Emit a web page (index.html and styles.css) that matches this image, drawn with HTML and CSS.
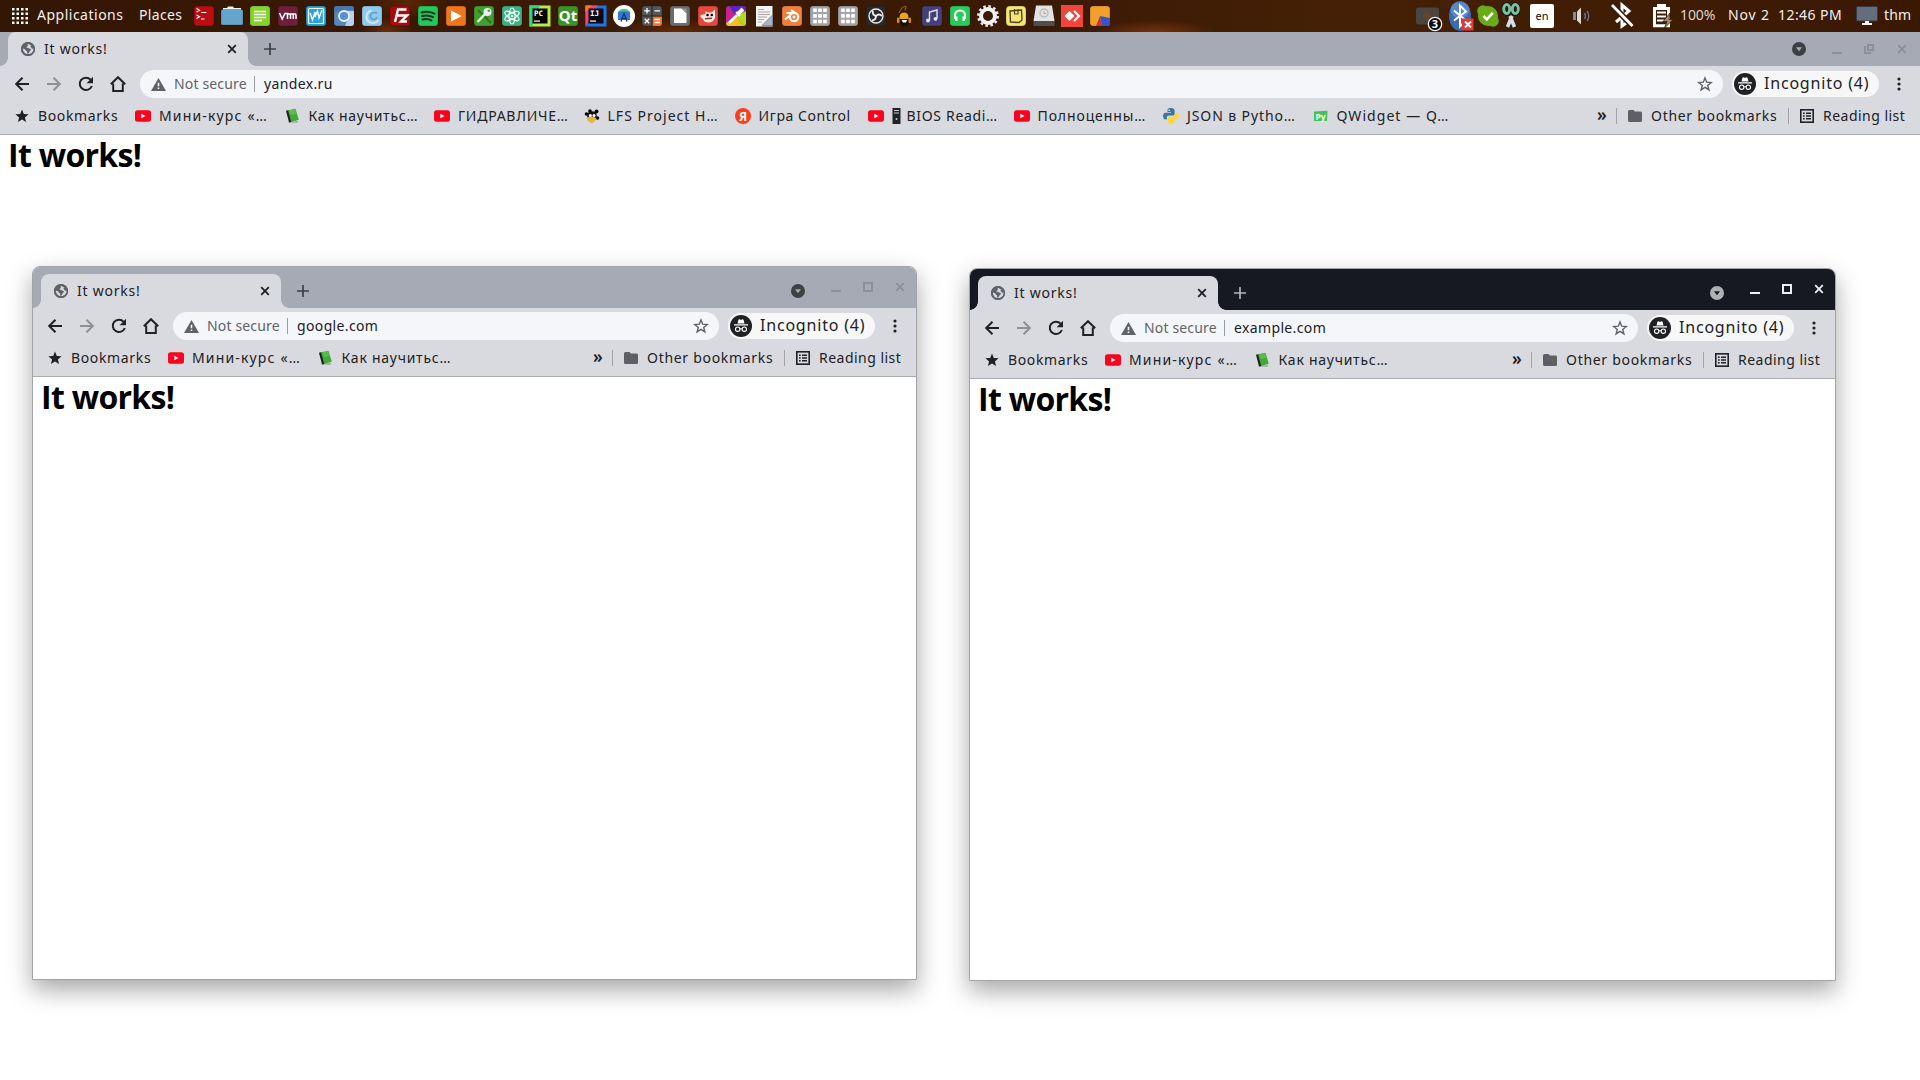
FILE: index.html
```html
<!DOCTYPE html>
<html lang="en">
<head>
<meta charset="utf-8">
<title>It works!</title>
<link rel="stylesheet" href="styles.css">
</head>
<body>
<svg class="defs" width="0" height="0">
  <symbol id="globe" viewBox="0 0 14 14"><circle cx="7" cy="7" r="7" fill="#5f6368"/><path d="M7.600 2c-1 .2-1.200.9-.8 1.500.3.600-.5.800-1 1.200-.6.500-.2 1 .6 1 1.500 0 1.500.9 2.500 1 1 0 1.200.9.600 1.700-.5.800-1 .7-1.300 1.600-.3.900-.9 2-1.800 2.100l-.3-2.400c-.1-.8-1.300-.6-1.400-1.500 0-.8-.8-.9-1.600-1.300l-1.300-.5c.2 3.400 2.400 5.700 5.500 5.700 3.300 0 5.700-2.500 5.700-5.500l-1.900.2c-.7-.2-.5-1.200-1.300-1.500-.9-.2-.2-1.200.6-1.600z" fill="#d9dadf"/><circle cx="7" cy="7" r="6.300" fill="none" stroke="#5f6368" stroke-width="1.500"/></symbol>
  <symbol id="close" viewBox="0 0 10 10"><path d="M1.200 1.200l7.600 7.600M8.800 1.200l-7.600 7.600" stroke="currentColor" stroke-width="1.800"/></symbol>
  <symbol id="plus" viewBox="0 0 12 12"><path d="M6 0v12M0 6h12" stroke="currentColor" stroke-width="1.700"/></symbol>
  <symbol id="tabsearch" viewBox="0 0 14 14"><circle cx="7" cy="7" r="7" fill="currentColor"/><path d="M4 5.200h6L7 9.200z" class="tri"/></symbol>
  <symbol id="min" viewBox="0 0 10 10"><path d="M0 8h10v2H0z" fill="currentColor"/></symbol>
  <symbol id="max" viewBox="0 0 10 10"><path d="M1 1h8v8H1z" fill="none" stroke="currentColor" stroke-width="2"/></symbol>
  <symbol id="restore" viewBox="0 0 10 10"><path d="M4 1h5v5H4z" fill="none" stroke="currentColor" stroke-width="2"/><path d="M1 2v7h6" fill="none" stroke="currentColor" stroke-width="2"/></symbol>
  <symbol id="back" viewBox="0 0 16 16"><path d="M15 8H2.500M8.500 1.700L2.200 8l6.300 6.300" fill="none" stroke="currentColor" stroke-width="2"/></symbol>
  <symbol id="forward" viewBox="0 0 16 16"><path d="M1 8h12.500M7.500 1.700L13.800 8l-6.300 6.300" fill="none" stroke="currentColor" stroke-width="2"/></symbol>
  <symbol id="reload" viewBox="0 0 16 16"><path d="M13.800 10A6.200 6.200 0 1 1 12.600 3.700" fill="none" stroke="currentColor" stroke-width="2"/><path d="M15 .8v6.400H8.600z" fill="currentColor"/></symbol>
  <symbol id="home" viewBox="0 0 16 16"><path d="M.8 8.300L8 1.200l7.200 7.100M3.200 7.500v7.500h9.600V7.500" fill="none" stroke="currentColor" stroke-width="2"/></symbol>
  <symbol id="warn" viewBox="0 0 15 13"><path d="M7.500 0L15 13H0z" fill="#5f6368"/><path d="M6.700 4.800h1.600v3.500H6.700zM6.700 9.500h1.600v1.600H6.700z" fill="#f5f6f9"/></symbol>
  <symbol id="staroutline" viewBox="0 0 16 16"><path d="M8 1.900l1.700 4.300 4.600.3-3.600 2.900 1.200 4.500L8 11.400l-3.900 2.500 1.200-4.500L1.700 6.500l4.600-.3z" fill="none" stroke="#5f6368" stroke-width="1.400"/></symbol>
  <symbol id="incog" viewBox="0 0 22 22"><circle cx="11" cy="11" r="11" fill="#202124"/><path d="M7.500 8.500L8.400 5c.2-.7.800-.8 1.400-.5.800.3 1.600.3 2.400 0 .6-.3 1.200-.2 1.400.5l.9 3.500zM4 9.300h14v1.200H4z" fill="#fff"/><circle cx="7.700" cy="14.200" r="2.200" fill="none" stroke="#fff" stroke-width="1.100"/><circle cx="14.300" cy="14.200" r="2.200" fill="none" stroke="#fff" stroke-width="1.100"/><path d="M9.900 14q1.100-.8 2.200 0" fill="none" stroke="#fff"/></symbol>
  <symbol id="dots" viewBox="0 0 4 14"><circle cx="2" cy="2" r="1.600"/><circle cx="2" cy="7" r="1.600"/><circle cx="2" cy="12" r="1.600"/></symbol>
  <symbol id="star" viewBox="0 0 16 16"><path d="M8 1.500l1.800 4.500 4.800.3-3.700 3.100 1.200 4.700L8 11.500l-4.100 2.600 1.200-4.700L1.400 6.300 6.200 6z" fill="#202124"/></symbol>
  <symbol id="yt" viewBox="0 0 16 16"><rect y="2.300" width="16" height="11.400" rx="2.500" fill="#f9041c"/><path d="M6.300 5.700v4.600l4.200-2.300z" fill="#fff"/></symbol>
  <symbol id="book" viewBox="0 0 16 16"><path d="M2 14.300l11.500-1.500L12 15z" fill="#aaa"/><path d="M1 2.700l3-.7L6.500 14l-2.500.5z" fill="#1d2320"/><path d="M3 2.200L10.500.800l3.300 11L6.300 14z" fill="#43a83a"/><path d="M4 2.500l6-1.200 1.500 4.800-6 1z" fill="#5dbb4b"/></symbol>
  <symbol id="folder" viewBox="0 0 14 12"><path d="M1.500 0H5.500L7 1.600h5.500A1.500 1.500 0 0 1 14 3v7.500A1.500 1.500 0 0 1 12.500 12h-11A1.500 1.500 0 0 1 0 10.500v-9A1.500 1.500 0 0 1 1.500 0z" fill="#5f6063"/></symbol>
  <symbol id="list" viewBox="0 0 14 14"><rect x=".8" y=".8" width="12.400" height="12.400" fill="none" stroke="#202124" stroke-width="1.600"/><path d="M3 4.200h1.700M6 4.200h5M3 7h1.700M6 7h5M3 9.800h1.700M6 9.800h5" stroke="#202124" stroke-width="1.400"/></symbol>
</svg>

<header class="panel">
  <svg class="grid" width="16" height="16" viewBox="0 0 16 16" fill="#fff"><path d="M0 0h2.500v2.500H0zM4.500 0H7v2.500H4.500zM9 0h2.500v2.500H9zM13.500 0H16v2.500h-2.500zM0 4.500h2.500V7H0zM4.500 4.500H7V7H4.500zM9 4.500h2.500V7H9zM13.500 4.500H16V7h-2.500zM0 9h2.500v2.500H0zM4.500 9H7v2.500H4.500zM9 9h2.500v2.500H9zM13.500 9H16v2.500h-2.500zM0 13.500h2.500V16H0zM4.500 13.500H7V16H4.500zM9 13.500h2.500V16H9zM13.500 13.500H16V16h-2.500z"/></svg>
  <span class="menu menu-apps">Applications</span>
  <span class="menu menu-places">Places</span>
  <div class="launchers">
    <svg viewBox="0 0 28 32"><rect class="b" x="4" y="6" width="20" height="20" rx="3" fill="#b90d12"/><path d="M6.500 8.500l3 1.700-3 1.700M6.500 15l3 1.700-3 1.700M11 12.500h5.500M11 19h3.500" fill="none" stroke="#fff" stroke-width="1.200"/></svg>
    <svg viewBox="0 0 28 32"><path d="M5 11V8h4l1-1.500h5L16 8h7v3z" fill="#f4f4f4"/><rect class="b" x="3" y="9.500" width="22" height="15.500" rx="1.500" fill="#66a5cb"/></svg>
    <svg viewBox="0 0 28 32"><rect class="b" x="4" y="6" width="20" height="20" rx="3" fill="#84d42b"/><path d="M8 11.500h12M8 14.500h12M8 17.500h12M8 20.500h8" stroke="#fff" stroke-width="1.300"/></svg>
    <svg viewBox="0 0 28 32"><rect class="b" x="4" y="6" width="20" height="20" rx="3" fill="#6f1f3a"/><path d="M5.500 13l2.700 6 2.800-5.500h2.500V19v-5h3V19M16.500 14h4.500q1 0 1 1.500V19M19.300 14v5" fill="none" stroke="#fff" stroke-width="1.500"/></svg>
    <svg viewBox="0 0 28 32"><rect class="b" x="4" y="6" width="20" height="20" rx="3" fill="#27a5da"/><rect x="6.500" y="8.500" width="15" height="15" rx="1" fill="none" stroke="#fff" stroke-width="1.200"/><path d="M8 13l2.500 7L13 12v5l2.500-6 1.500 7 3-8" fill="none" stroke="#fff" stroke-width="1.300"/></svg>
    <svg viewBox="0 0 28 32"><rect class="b" x="4" y="6" width="20" height="20" rx="3" fill="#5588bf"/><path d="M14 10h10v-1q0-3-3-3H7Q4 6 4 9v4z" fill="#4778ae"/><path d="M19 16l-4 10h6q3 0 3-3V11h-7z" fill="#b9d2ec"/><circle cx="14" cy="16" r="5" fill="#5a8fd0" stroke="#e9f1fa" stroke-width="1.800"/></svg>
    <svg viewBox="0 0 28 32"><rect class="b" x="4" y="6" width="20" height="20" rx="3" fill="#90c9ee"/><path d="M20.500 20q-2 3-6 3-6-.5-6-6 0-5 5-6.500" fill="none" stroke="#c9e8fb" stroke-width="2"/><path d="M19 13q-5-1.500-6.500 2-.5 4 3 4.500 3 0 3.500-2.500" fill="none" stroke="#5a9fd0" stroke-width="1.500"/></svg>
    <svg viewBox="0 0 28 32"><rect class="b" x="4" y="6" width="20" height="20" rx="3" fill="#a80a0e"/><path d="M9 22l3-12.500h8.500M10.500 15.500h5M15 15.500h6L15 21.500h6" fill="none" stroke="#fff" stroke-width="2.400"/></svg>
    <svg viewBox="0 0 28 32"><rect class="b" x="4" y="6" width="20" height="20" rx="3" fill="#23c75b"/><path d="M7.500 12.500q7-2 13 1.200M8 16q6-1.600 11 1.200M8.500 19.500q5-1.200 9 1" fill="none" stroke="#17341f" stroke-width="2" stroke-linecap="round"/></svg>
    <svg viewBox="0 0 28 32"><rect class="b" x="4" y="6" width="20" height="20" rx="3" fill="#ef761d"/><path d="M9 10.500v11L20 16z" fill="#fff"/></svg>
    <svg viewBox="0 0 28 32"><rect class="b" x="4" y="6" width="20" height="20" rx="3" fill="#3fa02f"/><path d="M8 10l13 13" stroke="#2c7521" stroke-width="2"/><circle cx="17.500" cy="12" r="4" fill="#eee"/><path d="M16 13l-8.500 9" stroke="#eee" stroke-width="2.500"/><circle cx="18.800" cy="10.700" r="1.200" fill="#3fa02f"/></svg>
    <svg viewBox="0 0 28 32"><rect class="b" x="4" y="6" width="20" height="20" rx="3" fill="#40ae84"/><g fill="none" stroke="#e8fff6" stroke-width="1.100"><ellipse cx="14" cy="16" rx="3" ry="8"/><ellipse cx="14" cy="16" rx="3" ry="8" transform="rotate(60 14 16)"/><ellipse cx="14" cy="16" rx="3" ry="8" transform="rotate(120 14 16)"/></g><circle cx="14" cy="16" r="1.300" fill="#fff"/></svg>
    <svg viewBox="0 0 28 32"><path d="M3.500 5.500h21v21h-21z" fill="#b9ed3b"/><path d="M3.500 5.500H14l-8 21H3.500z" fill="#35d47c"/><path d="M6.500 8.500h15v15h-15z"/><text x="8" y="16" class="ide">PC</text><path d="M8 20.500h6v1.200H8z" fill="#fff"/></svg>
    <svg viewBox="0 0 28 32"><rect class="b" x="4" y="6" width="20" height="20" rx="3" fill="#3c9127"/><text x="14" y="21" class="qt">Qt</text></svg>
    <svg viewBox="0 0 28 32"><path d="M3.500 5.500h21v21h-21z" fill="#1977e8"/><path d="M3.500 26.500v-21H16z" fill="#f1427c"/><path d="M3.500 12V5.500H10z" fill="#f97a2a"/><path d="M6.500 8.500h15v15h-15z" fill="#0b0714"/><text x="8" y="16" class="ide">IJ</text><path d="M8 20.500h6v1.200H8z" fill="#fff"/></svg>
    <svg viewBox="0 0 28 32"><circle cx="14" cy="16" r="11" fill="#fff"/><path d="M9 12q0-3 5-3t5 3z" fill="#3ccb7e"/><path d="M8 11.500h12V20h-2l-4-7-4 7H8z" fill="#3478dc"/><path d="M9.500 12h9v8h-9z" fill="#3478dc"/><path d="M14 13l-3 8.500M14 13l3 8.500M12 18.500h4" stroke="#12315f" stroke-width="1.200"/></svg>
    <svg viewBox="0 0 28 32"><rect class="b" x="4" y="6" width="20" height="20" rx="3" fill="#55565a"/><path d="M14.500 16.500H24V23q0 3-3 3h-6.500z" fill="#f2742a"/><path d="M14 6v20M4 16h20" stroke="#2b2018"/><path d="M9 8v5.600M6.200 10.800h5.600M16.500 10.800H22M6.700 18.700l4.500 4.500M11.200 18.700l-4.500 4.500M16.500 19.500H22M16.500 22.500H22" stroke="#fff" stroke-width="1.300"/></svg>
    <svg viewBox="0 0 28 32"><rect class="b" x="4" y="6" width="20" height="20" rx="3" fill="#6c6d70"/><path d="M8 8.500h7.500l5 5V23H8z" fill="#fff"/><path d="M15.500 8.500h5v5z" fill="#999"/></svg>
    <svg viewBox="0 0 28 32"><rect class="b" x="4" y="6" width="20" height="20" rx="3" fill="#e5483d"/><path d="M6.500 15l5-1V11l2 1.500h4l3.500-3V18q-2 4.500-7 4.500-4.500-.5-5-3.500l-2.500-2z" fill="#f8e9e2"/><circle cx="13.500" cy="15" r="1.300"/><circle cx="17.800" cy="15" r="1.300"/><path d="M11 18.800l7-.5" stroke="#8a3a30" stroke-width="1.400"/></svg>
    <svg viewBox="0 0 28 32"><rect x="4" y="6" width="20" height="20" rx="3" fill="#c3248c"/><path d="M7 6h14q3 0 3 3v3L14 16z" fill="#5426c4"/><path d="M24 11v12q0 3-3 3l-7-10z" fill="#aedb22"/><path d="M21 26H7q-3 0-3-3l10-7z" fill="#f3c11e"/><path d="M7 23l8-8" stroke="#fff" stroke-width="2.500"/><path d="M14 12l4 4" stroke="#fff" stroke-width="2"/><path d="M16 14l5-5" stroke="#fff" stroke-width="4"/></svg>
    <svg viewBox="0 0 28 32"><path d="M6 6h16.500v20.500H6z" fill="#f3f3f3"/><path d="M8 9.500h6M8 12h12M8 14.500h12M8 17h9M8 19.500h6M8 22h4" stroke="#aaa" stroke-width="1.200"/><path d="M12 25.500h10.500V15z" fill="#a9b3c6" stroke="#73809b" stroke-width=".8"/></svg>
    <svg viewBox="0 0 28 32"><rect class="b" x="4" y="6" width="20" height="20" rx="3" fill="#f2803b"/><path d="M7 19.500l8-6.500H8.500M13 10l5 3.500" fill="none" stroke="#fff" stroke-width="2"/><circle cx="16" cy="17" r="4.200" fill="#f2803b" stroke="#fff" stroke-width="2.200"/><circle cx="16" cy="17" r="1.500" fill="#fff"/></svg>
    <svg viewBox="0 0 28 32"><rect class="b" x="4" y="6" width="20" height="20" rx="3" fill="#a5a5a7"/><path class="cells" d="M9 8.500v15.500M14 8.500v15.500M19 8.500v15.500"/></svg>
    <svg viewBox="0 0 28 32"><rect class="b" x="4" y="6" width="20" height="20" rx="3" fill="#a5a5a7"/><path class="cells" d="M9 8.500v15.500M14 8.500v15.500M19 8.500v15.500"/></svg>
    <svg viewBox="0 0 28 32"><rect class="b" x="4" y="6" width="20" height="20" rx="3" fill="#29292b"/><circle cx="14" cy="16" r="7" fill="none" stroke="#eee" stroke-width="1.300"/><path d="M14 16q-4-1-3-5M14 16q3-3 6 0M14 16q0 4-4 4.500" fill="none" stroke="#eee" stroke-width="1.900"/></svg>
    <svg viewBox="0 0 28 32"><path d="M9 13q4-8 7-6.500l-1 4" fill="none" stroke="#8a5a0c" stroke-width="1.200"/><path d="M8 20q-1-8 6-8t6 8l-3 6.500h-5z" fill="#15110a"/><path d="M9.500 17q0-4.500 4.500-4.500t4.500 4.500v2h-9z" fill="#eba51a"/><rect x="7" y="17.500" width="2.500" height="5.500" rx="1" fill="#d58c10"/><rect x="18.500" y="17.500" width="2.500" height="5.500" rx="1" fill="#d58c10"/><path d="M11.500 20h5.500l-1 2.500h-3z" fill="#fff"/></svg>
    <svg viewBox="0 0 28 32"><rect class="b" x="4" y="6" width="20" height="20" rx="3" fill="#454078"/><path d="M11.500 20.500V12l7.500-2v8.500" fill="none" stroke="#e3e1f5" stroke-width="1.400"/><circle cx="10" cy="20.500" r="1.900" fill="#e3e1f5"/><circle cx="17.500" cy="18.800" r="1.900" fill="#e3e1f5"/></svg>
    <svg viewBox="0 0 28 32"><rect class="b" x="4" y="6" width="20" height="20" rx="3" fill="#27cb58"/><path d="M9 19v-3.500q0-5 5-5t5 5V19" fill="none" stroke="#fff" stroke-width="2"/><path d="M8.500 16.500h3V21h-2zM16.500 16.500h3l-1 4.500h-2z" fill="#fff"/></svg>
    <svg viewBox="0 0 28 32"><circle cx="14" cy="16" r="9.700" fill="none" stroke="#eee" stroke-width="2.500" stroke-dasharray="2.540 2.540"/><circle cx="14" cy="16" r="7" fill="none" stroke="#f2f2f2" stroke-width="4"/></svg>
    <svg viewBox="0 0 28 32"><rect class="b" x="4" y="6" width="20" height="20" rx="4" fill="#f5e576"/><path d="M8 11l11.500-1L20 20l-3 2.500L8.500 22z" fill="none" stroke="#4c4520" stroke-width="1.400"/><path d="M12.500 9v5h3.500V9" fill="none" stroke="#4c4520" stroke-width="1.200"/></svg>
    <svg viewBox="0 0 28 32"><path d="M6 5.500h16L24.500 21h-21z" fill="#e2e2e2"/><path d="M3.500 21h21v5h-21z" fill="#4e4e50"/><circle cx="14" cy="13" r="4" fill="none" stroke="#bbb" stroke-width="1.400"/><path d="M14 11v2.500h2" fill="none" stroke="#aaa"/></svg>
    <svg viewBox="0 0 28 32"><path d="M3 5h22v22H3z" fill="#f1443b"/><path d="M6.500 16l5-5 5 5-5 5z" fill="#fff"/><path d="M16 11l5 5-5 5" fill="none" stroke="#fff" stroke-width="2.200"/></svg>
    <svg viewBox="0 0 28 32"><rect class="b" x="4" y="6" width="20" height="20" rx="3" fill="#f2a02a"/><path d="M14 16l-4 10h6z" fill="#d3312f"/><path d="M14 16l10 2v5q0 3-3 3h-5z" fill="#3552cf"/></svg>
  </div>
  <div class="tray">
    <svg width="28" height="32" viewBox="0 0 28 32"><rect x="1" y="7.500" width="23" height="17" rx="3" fill="#484543"/><path d="M12 12v8M8 16h8" stroke="#6e4322" stroke-width="3"/><circle cx="20" cy="24" r="6.700" fill="#0a0a0a" stroke="#eee" stroke-width="1.300"/><text x="20" y="28" class="badge">3</text></svg>
    <svg class="tray-bt" width="27" height="32" viewBox="0 0 27 32"><ellipse cx="12" cy="16" rx="11" ry="15" fill="#3c6cae"/><ellipse cx="12" cy="10" rx="9.500" ry="8" fill="#5c89c4"/><path d="M6 10.500l12 10-6 6V5.500l6 6-12 9" fill="none" stroke="#fff" stroke-width="1.900"/><path d="M14 18.500h11.500v12H14z" fill="#e33838"/><path d="M17 21.500l6 6M23 21.500l-6 6" stroke="#fff" stroke-width="1.900"/></svg>
    <svg class="tray-skype" width="22" height="32" viewBox="0 0 22 32"><circle cx="11" cy="16" r="10" fill="#68ac17"/><circle cx="6" cy="11" r="5.800" fill="#68ac17"/><circle cx="16" cy="21" r="5.800" fill="#68ac17"/><path d="M6.500 16l3.300 3.300 6-6.500" fill="none" stroke="#fff" stroke-width="2.600"/></svg>
    <svg class="tray-cut" width="18" height="32" viewBox="0 0 18 32"><g fill="none" stroke="#111" stroke-width="4.500"><ellipse cx="4.700" cy="9" rx="3" ry="4.500"/><ellipse cx="13.300" cy="9" rx="3" ry="4.500"/></g><path d="M8 16l4.500 12M10 16L5.500 28" stroke="#222" stroke-width="6"/><path d="M8 16l4.500 11M10 16L5.500 27" stroke="#ddd" stroke-width="3.600"/><g fill="none" stroke="#74c2a4" stroke-width="3"><ellipse cx="4.700" cy="9" rx="3" ry="4.500"/><ellipse cx="13.300" cy="9" rx="3" ry="4.500"/></g></svg>
    <span class="lang">en</span>
    <svg class="tray-vol" width="20" height="32" viewBox="0 0 20 32"><path d="M1 12h3v8H1z" fill="#878a8b"/><path d="M5 11.500l4-4v17l-4-4z" fill="#d7d8d8"/><path d="M12.500 13q2 3 0 6M15 11q3.500 5 0 10" fill="none" stroke="#5d7189" stroke-width="1.400"/></svg>
    <svg class="tray-btoff" width="23" height="32" viewBox="0 0 23 32"><path d="M5 22l13-11-7-6v21l7-5-5-4" fill="none" stroke="#fff" stroke-width="3"/><path d="M1 5l20.500 21" stroke="#3b1a05" stroke-width="6"/><path d="M1 5l20.500 21" stroke="#fff" stroke-width="2.800"/></svg>
    <svg class="tray-batt" width="22" height="32" viewBox="0 0 22 32"><path d="M2.500 8.500h14v17.200h-14z" fill="none" stroke="#fff" stroke-width="3"/><path d="M5 4h9v4H5z" fill="#fff"/><path d="M5 12.500h9M5 16.500h9M5 20.500h9" stroke="#fff" stroke-width="2"/><path d="M18 13l-7 8.500h4L12.500 28 21 19.500h-4z" fill="#a58c7a" stroke="#3b1a05" stroke-width=".8"/></svg>
    <span class="percent">100%</span>
    <span class="date">Nov 2</span>
    <span class="time">12:46 PM</span>
    <svg class="tray-mon" width="22" height="32" viewBox="0 0 22 32"><rect x=".5" y="6.500" width="21" height="14.500" rx="1" fill="#646d7b" stroke="#343a45"/><path d="M9 21h4v2h3v2H6v-2h3z" fill="#f4f4f4"/></svg>
    <span class="user">thm</span>
  </div>
</header>

<main class="browser maximized">
  <div class="strip">
    <div class="tab"><svg class="fav"><use href="#globe"/></svg><span class="title">It works!</span><svg class="x"><use href="#close"/></svg></div>
    <svg class="new"><use href="#plus"/></svg>
    <div class="controls"><svg class="search"><use href="#tabsearch"/></svg><svg><use href="#min"/></svg><svg><use href="#restore"/></svg><svg><use href="#close"/></svg></div>
  </div>
  <div class="toolbar">
    <svg class="nav"><use href="#back"/></svg><svg class="nav off"><use href="#forward"/></svg><svg class="nav"><use href="#reload"/></svg><svg class="nav"><use href="#home"/></svg>
    <div class="omnibox"><svg class="warn"><use href="#warn"/></svg><span class="insecure">Not secure</span><i></i><span class="url">yandex.ru</span><svg class="fave"><use href="#staroutline"/></svg></div>
    <div class="chip"><svg><use href="#incog"/></svg><span>Incognito (4)</span></div>
    <svg class="dots"><use href="#dots"/></svg>
  </div>
  <div class="bookmarks">
    <a class="w-star"><svg><use href="#star"/></svg><span class="ls57">Bookmarks</span></a>
    <a><svg><use href="#yt"/></svg><span class="ls109">Мини-курс «…</span></a>
    <a><svg><use href="#book"/></svg><span class="ls68">Как научитьс…</span></a>
    <a><svg><use href="#yt"/></svg><span class="ls66">ГИДРАВЛИЧЕ…</span></a>
    <a class="w-lfs"><svg viewBox="0 0 16 16"><circle cx="8" cy="8" r="4.800" fill="#17130e"/><circle cx="2.500" cy="6" r="1.800"/><circle cx="12.500" cy="3.500" r="2"/><circle cx="13.500" cy="10" r="1.800"/><circle cx="6" cy="3" r="1.800"/><path d="M2.500 10q4-3 10 0l-2 3.500L8 15.500 4 13z" fill="#e8b53c"/><circle cx="6.300" cy="7.500" r="1.500" fill="#fff"/><circle cx="10" cy="7.500" r="1.500" fill="#fff"/></svg><span class="ls94">LFS Project H…</span></a>
    <a class="w-ya"><svg viewBox="0 0 16 16"><circle cx="8" cy="8" r="8" fill="#fc3f1d"/><text x="8" y="12.500" class="ya">Я</text></svg><span class="ls52">Игра Control</span></a>
    <a class="w-bios"><svg><use href="#yt"/></svg><svg class="tower" viewBox="0 0 9 16"><path d="M.5 0h8v16h-8z" fill="#222326"/><path d="M2 2.500h5M2 5h5" stroke="#ccc"/><circle cx="4.500" cy="11" r="1" fill="#ccc"/></svg><span class="ls61">BIOS Readi…</span></a>
    <a><svg><use href="#yt"/></svg><span class="ls81">Полноценны…</span></a>
    <a><svg viewBox="0 0 16 16"><path d="M8 0C5 0 4.500 1.200 4.500 2.500V4H8v.700H2.800C1 4.700 0 6 0 8s1 3.400 2.500 3.400h1.300V9.700c0-1.300 1-2.200 2.300-2.200h3.700c1 0 1.800-.8 1.800-1.800V2.500C11.600.8 10 0 8 0z" fill="#3a75a8"/><path d="M8 16c3 0 3.500-1.200 3.500-2.500V12H8v-.700h5.200C15 11.300 16 10 16 8s-1-3.400-2.500-3.400h-1.300v1.700c0 1.300-1 2.200-2.300 2.200H6.200c-1 0-1.800.8-1.800 1.800v3.200C4.400 15.200 6 16 8 16z" fill="#ffd745"/><circle cx="6.200" cy="2.200" r=".8" fill="#fff"/></svg><span class="ls82">JSON в Pytho…</span></a>
    <a><svg viewBox="0 0 16 16"><path d="M1 3.500L14.500 2.800 14 13H1z" fill="#3fc558"/><text x="2.500" y="11.500" class="py">Py</text></svg><span class="ls97">QWidget — Q…</span></a>
    <div class="right"><span class="more">»</span><i></i><svg class="folder"><use href="#folder"/></svg><span class="other">Other bookmarks</span><i></i><svg class="list"><use href="#list"/></svg><span class="reading">Reading list</span></div>
  </div>
  <div class="page"><h1>It works!</h1></div>
</main>

<section class="browser floating google">
  <div class="strip">
    <div class="tab"><svg class="fav"><use href="#globe"/></svg><span class="title">It works!</span><svg class="x"><use href="#close"/></svg></div>
    <svg class="new"><use href="#plus"/></svg>
    <div class="controls"><svg class="search"><use href="#tabsearch"/></svg><svg><use href="#min"/></svg><svg><use href="#max"/></svg><svg><use href="#close"/></svg></div>
  </div>
  <div class="toolbar">
    <svg class="nav"><use href="#back"/></svg><svg class="nav off"><use href="#forward"/></svg><svg class="nav"><use href="#reload"/></svg><svg class="nav"><use href="#home"/></svg>
    <div class="omnibox"><svg class="warn"><use href="#warn"/></svg><span class="insecure">Not secure</span><i></i><span class="url">google.com</span><svg class="fave"><use href="#staroutline"/></svg></div>
    <div class="chip"><svg><use href="#incog"/></svg><span>Incognito (4)</span></div>
    <svg class="dots"><use href="#dots"/></svg>
  </div>
  <div class="bookmarks">
    <a class="w-star"><svg><use href="#star"/></svg><span class="ls57">Bookmarks</span></a>
    <a><svg><use href="#yt"/></svg><span class="ls109">Мини-курс «…</span></a>
    <a><svg><use href="#book"/></svg><span class="ls68">Как научитьс…</span></a>
    <div class="right"><span class="more">»</span><i></i><svg class="folder"><use href="#folder"/></svg><span class="other">Other bookmarks</span><i></i><svg class="list"><use href="#list"/></svg><span class="reading">Reading list</span></div>
  </div>
  <div class="page"><h1>It works!</h1></div>
</section>

<section class="browser floating example focused">
  <div class="strip">
    <div class="tab"><svg class="fav"><use href="#globe"/></svg><span class="title">It works!</span><svg class="x"><use href="#close"/></svg></div>
    <svg class="new"><use href="#plus"/></svg>
    <div class="controls"><svg class="search"><use href="#tabsearch"/></svg><svg><use href="#min"/></svg><svg><use href="#max"/></svg><svg><use href="#close"/></svg></div>
  </div>
  <div class="toolbar">
    <svg class="nav"><use href="#back"/></svg><svg class="nav off"><use href="#forward"/></svg><svg class="nav"><use href="#reload"/></svg><svg class="nav"><use href="#home"/></svg>
    <div class="omnibox"><svg class="warn"><use href="#warn"/></svg><span class="insecure">Not secure</span><i></i><span class="url">example.com</span><svg class="fave"><use href="#staroutline"/></svg></div>
    <div class="chip"><svg><use href="#incog"/></svg><span>Incognito (4)</span></div>
    <svg class="dots"><use href="#dots"/></svg>
  </div>
  <div class="bookmarks">
    <a class="w-star"><svg><use href="#star"/></svg><span class="ls57">Bookmarks</span></a>
    <a><svg><use href="#yt"/></svg><span class="ls109">Мини-курс «…</span></a>
    <a><svg><use href="#book"/></svg><span class="ls68">Как научитьс…</span></a>
    <div class="right"><span class="more">»</span><i></i><svg class="folder"><use href="#folder"/></svg><span class="other">Other bookmarks</span><i></i><svg class="list"><use href="#list"/></svg><span class="reading">Reading list</span></div>
  </div>
  <div class="page"><h1>It works!</h1></div>
</section>
</body>
</html>
```
FILE: styles.css
```css
* { box-sizing: border-box; }
html, body { height: 100%; }
body {
  margin: 0;
  overflow: hidden;
  display: flex;
  flex-direction: column;
  background: #fff;
  color: #202124;
  font: 14px/20px "Noto Sans", "Open Sans", sans-serif;
}
svg { display: block; flex: none; }
.defs { position: absolute; }
span { white-space: nowrap; }

/* Desktop panel */
.panel {
  height: 32px;
  flex: none;
  display: flex;
  align-items: center;
  color: #f3efec;
  background:
    radial-gradient(ellipse 26px 14px at 388px 31px, #8a380b99, transparent),
    radial-gradient(ellipse 40px 16px at 408px 3px, #7a320a88, transparent),
    radial-gradient(ellipse 60px 14px at 675px 32px, #8a380b88, transparent),
    radial-gradient(ellipse 60px 12px at 1155px 32px, #97400e99, transparent),
    linear-gradient(90deg, #341604, #3b1a05 30%, #3b1a05 55%, #452005 70%, #3a1804);
}
.panel .grid { margin-left: 12px; }
.menu, .percent, .date, .time, .user { height: 20px; margin-top: -2px; }
.menu-apps { margin-left: 9px; width: 102px; letter-spacing: .5px; }
.menu-places { width: 51px; letter-spacing: .35px; }
.launchers { display: flex; }
.launchers svg { width: 28px; height: 32px; }
.launchers .b { stroke: rgba(0, 0, 0, .28); stroke-width: .8; }
.ide { font: 700 7.5px "DejaVu Sans Mono", monospace; fill: #fff; }
.qt { font: 700 15px "Noto Sans", sans-serif; fill: #fff; text-anchor: middle; }
.cells { stroke: #fff; stroke-width: 3.6; stroke-dasharray: 3.6 2; fill: none; }
.tray { margin-left: auto; width: 505px; display: flex; align-items: center; }
.badge { font: 700 11px "Noto Sans", sans-serif; fill: #fff; text-anchor: middle; }
.tray-bt { margin-left: 5px; }
.tray-skype { margin-left: 2px; }
.tray-cut { margin-left: 3px; }
.lang {
  width: 24px; height: 24px; margin-left: 10px;
  border-radius: 2px; background: #fff; color: #111;
  font-size: 11px; line-height: 24px; text-align: center;
}
.tray-vol { margin-left: 18px; }
.tray-btoff { margin-left: 19px; }
.tray-batt { margin-left: 18px; }
.percent { width: 48px; margin-left: 6px; color: #ddd5cf; letter-spacing: -.1px; margin-top: -3px; }
.date { width: 50px; letter-spacing: .85px; }
.time { width: 78px; letter-spacing: .45px; }
.user { margin-left: 6px; letter-spacing: .1px; margin-top: -3px; }

/* Browser windows */
.browser { --frame: #a6aab5; --tab: #d9dadf; --ctl: #8b8f9a; display: flex; flex-direction: column; }
.maximized { flex: 1; }
.floating {
  position: absolute;
  border: 1px solid #a3a4a6;
  border-radius: 8px 8px 0 0;
  background: #fff;
  box-shadow: 0 10px 24px rgba(0, 0, 0, .35);
}
.google { left: 32px; top: 266px; width: 885px; height: 714px; }
.example { left: 969px; top: 268px; width: 867px; height: 713px; }
.focused { --frame: #161922; --ctl: #eceef2; }

.strip {
  height: 34px; flex: none; padding-left: 8px;
  display: flex; align-items: center;
  background: var(--frame); color: #3c4043;
}
.floating .strip { height: 41px; padding-top: 7px; border-radius: 7px 7px 0 0; }
.tab {
  position: relative;
  width: 240px; height: 34px; padding: 0 11px 0 13px;
  display: flex; align-items: center;
  background: var(--tab); border-radius: 8px 8px 0 0;
}
.tab::before, .tab::after {
  content: ""; position: absolute; bottom: 0; width: 8px; height: 8px;
}
.tab::before { left: -8px; background: radial-gradient(circle at 0 0, transparent 7.5px, var(--tab) 8px); }
.tab::after { right: -8px; background: radial-gradient(circle at 100% 0, transparent 7.5px, var(--tab) 8px); }
.fav { width: 14px; height: 14px; }
.title { margin-left: 9px; letter-spacing: .75px; color: #202124; }
.x { width: 10px; height: 10px; margin-left: auto; color: #202124; }
.new { width: 12px; height: 12px; margin-left: 16px; }
.focused .new { color: #b3b5ba; }
.controls { margin-left: auto; display: flex; align-items: center; gap: 22px; color: var(--ctl); }
.controls svg { width: 10px; height: 10px; }
.controls .search { width: 14px; height: 14px; margin-right: 4px; color: #3c4043; }
.tri { fill: var(--frame); }
.focused .controls .search { color: #b0b1b4; }
.maximized .controls { padding-right: 13px; }
.maximized .controls svg:last-child { margin-left: 1px; }
.floating .controls { padding-right: 11px; }
.floating .controls svg:not(.search) { margin-top: -8px; }

.toolbar {
  height: 36px; flex: none; padding: 0 11px 0 6px;
  display: flex; align-items: center; background: var(--tab);
}
.nav { width: 16px; height: 16px; margin: 0 8px; color: #202124; }
.off { color: #8e9096; }
.omnibox {
  flex: 1; height: 28px; margin: 0 9px 0 6px; padding: 0 10px 0 11px;
  display: flex; align-items: center;
  border-radius: 14px; background: #f5f6f9;
}
.omnibox i { width: 1px; height: 16px; background: #9a9ca1; }
.warn { width: 15px; height: 13px; }
.insecure { width: 80px; margin-left: 8px; color: #5f6368; letter-spacing: .15px; }
.url { margin-left: 9px; letter-spacing: .36px; }
.fave { width: 16px; height: 16px; margin-left: auto; }
.chip {
  width: 147px; height: 26px; padding-left: 2px;
  display: flex; align-items: center;
  border-radius: 13px; background: #f7f7f7;
}
.chip svg { width: 22px; height: 22px; }
.chip span { margin-left: 8px; font-size: 16px; letter-spacing: .8px; line-height: 20px; margin-top: -2px; }
.dots { width: 4px; height: 14px; margin: 0 8px 0 18px; fill: #202124; }

.bookmarks {
  height: 33px; flex: none; padding: 0 0 4px 14px;
  display: flex; align-items: center;
  background: var(--tab); border-bottom: 1px solid #a9abb0;
}
.bookmarks a { width: 149.5px; display: flex; align-items: center; }
.bookmarks a svg { width: 16px; height: 16px; margin-right: 8px; }
.bookmarks .w-star { width: 121px; }
.bookmarks .w-lfs { width: 151px; }
.bookmarks .w-ya { width: 133px; }
.bookmarks .w-bios { width: 146px; }
.bookmarks a .tower { width: 9px; margin-right: 6px; }
.ls52 { letter-spacing: .58px; }
.ls57 { letter-spacing: .65px; }
.ls61 { letter-spacing: .68px; }
.ls66 { letter-spacing: .74px; }
.ls68 { letter-spacing: .76px; }
.ls81 { letter-spacing: .89px; }
.ls82 { letter-spacing: .9px; }
.ls94 { letter-spacing: 1.02px; }
.ls97 { letter-spacing: 1.05px; }
.ls109 { letter-spacing: 1.16px; }
.ya { font: 700 12px "Noto Sans", sans-serif; fill: #fff; text-anchor: middle; }
.py { font: 700 8.5px "Noto Sans", sans-serif; fill: #fff; }
.right { width: 328px; margin-left: auto; display: flex; align-items: center; }
.right i { width: 1px; height: 16px; margin-right: 11px; background: #a0a2a7; }
.more { width: 24px; padding-left: 5px; font-size: 17px; font-weight: 600; line-height: 18px; margin-top: -2px; }
.folder { width: 14px; height: 12px; }
.other { width: 137px; margin-left: 9px; letter-spacing: .7px; }
.list { width: 14px; height: 14px; }
.reading { margin-left: 9px; letter-spacing: .48px; }

.page { flex: 1; background: #fff; }
.page h1 {
  margin: 0; padding: 1.5px 0 0 8px;
  font: 700 32px/36px "Open Sans", "Noto Sans", sans-serif;
  letter-spacing: -.7px; color: #000;
}
```
